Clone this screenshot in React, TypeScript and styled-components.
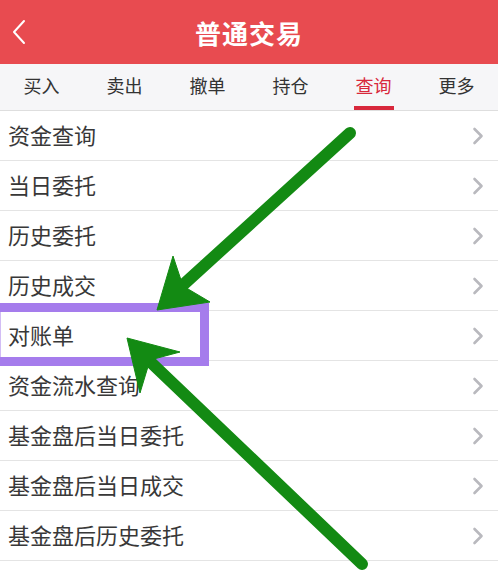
import styled, { createGlobalStyle } from "styled-components";

const GlobalStyle = createGlobalStyle`
  html, body {
    margin: 0;
    padding: 0;
    background: #ffffff;
  }
  body {
    font-family: "Noto Sans CJK SC", "Noto Sans", sans-serif;
  }
`;

const Page = styled.div`
  position: relative;
  width: 498px;
  height: 578px;
  overflow: hidden;
  background: #ffffff;
`;

const Header = styled.header`
  position: relative;
  height: 64px;
  background: #e84b50;
  display: flex;
  align-items: center;
  justify-content: center;
`;

const BackButton = styled.button`
  position: absolute;
  left: 8px;
  top: 18px;
  width: 22px;
  height: 28px;
  padding: 0;
  border: none;
  background: transparent;
  display: flex;
  align-items: center;
  justify-content: center;
`;

const Title = styled.h1`
  margin: 0;
  color: #ffffff;
  font-size: 26px;
  font-weight: 700;
  letter-spacing: 1px;
`;

const TabBar = styled.nav`
  height: 47px;
  background: #f6f6f8;
  border-bottom: 1px solid #dedede;
  display: grid;
  grid-template-columns: repeat(6, 1fr);
  box-sizing: border-box;
`;

const Tab = styled.div<{ $active?: boolean }>`
  position: relative;
  display: flex;
  align-items: center;
  justify-content: center;
  font-size: 18px;
  color: ${(p) => (p.$active ? "#d8283c" : "#333333")};
  padding-bottom: 4px;

  &::after {
    content: "";
    display: ${(p) => (p.$active ? "block" : "none")};
    position: absolute;
    left: 50%;
    bottom: 0;
    width: 40px;
    height: 4px;
    margin-left: -20px;
    background: #d8283c;
  }
`;

const List = styled.ul`
  margin: 0;
  padding: 0;
  list-style: none;
`;

const Row = styled.li`
  height: 50px;
  box-sizing: border-box;
  border-bottom: 1px solid #e4e4e4;
  display: flex;
  align-items: center;
  justify-content: space-between;
  padding: 0 14px 4px 8px;
  font-size: 22px;
  color: #383838;
`;

const ChevronIcon = styled.svg`
  margin-top: 4px;
  flex-shrink: 0;
`;

const Overlay = styled.svg`
  position: absolute;
  left: 0;
  top: 0;
  pointer-events: none;
`;

const tabs = ["买入", "卖出", "撤单", "持仓", "查询", "更多"];
const items = [
  "资金查询",
  "当日委托",
  "历史委托",
  "历史成交",
  "对账单",
  "资金流水查询",
  "基金盘后当日委托",
  "基金盘后当日成交",
  "基金盘后历史委托",
];

const Chevron = () => (
  <ChevronIcon width="12" height="20" viewBox="0 0 12 20">
    <path
      d="M2.5 3 L9.5 10 L2.5 17"
      fill="none"
      stroke="#b9b9be"
      strokeWidth="2.6"
      strokeLinecap="round"
      strokeLinejoin="round"
    />
  </ChevronIcon>
);

export default function App() {
  return (
    <Page>
      <GlobalStyle />
      <Header>
        <BackButton>
          <svg width="16" height="26" viewBox="0 0 16 26">
            <path
              d="M13 2 L3 13 L13 24"
              fill="none"
              stroke="#ffffff"
              strokeWidth="2"
              strokeLinecap="round"
              strokeLinejoin="round"
            />
          </svg>
        </BackButton>
        <Title>普通交易</Title>
      </Header>
      <TabBar>
        {tabs.map((t) => (
          <Tab key={t} $active={t === "查询"}>
            {t}
          </Tab>
        ))}
      </TabBar>
      <List>
        {items.map((it) => (
          <Row key={it}>
            <span>{it}</span>
            <Chevron />
          </Row>
        ))}
      </List>
      {/* annotation layer: highlight box and arrows drawn over the list */}
      <Overlay width="498" height="578" viewBox="0 0 498 578">
        <rect
          x="-4"
          y="307.5"
          width="208.5"
          height="54"
          fill="none"
          stroke="#a57cec"
          strokeWidth="9"
        />
        <g fill="#138a13" stroke="#138a13">
          <line
            x1="350"
            y1="133"
            x2="172"
            y2="295"
            strokeWidth="12"
            strokeLinecap="round"
          />
          <polygon
            points="157,310 173,256 183,286 210,302"
            strokeWidth="1"
            strokeLinejoin="round"
          />
          <line
            x1="362"
            y1="564"
            x2="140"
            y2="352"
            strokeWidth="12"
            strokeLinecap="round"
          />
          <polygon
            points="127,338 180,352 150,360 140,393"
            strokeWidth="1"
            strokeLinejoin="round"
          />
        </g>
      </Overlay>
    </Page>
  );
}
